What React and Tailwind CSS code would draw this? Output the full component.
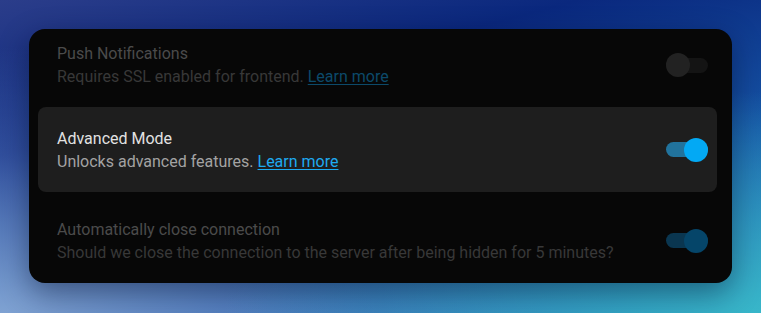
import { useState } from "react";

function Toggle({ on, dim }) {
  const track = on
    ? dim
      ? "bg-[#0a3650]"
      : "bg-[#21739d]"
    : "bg-[#141414]";
  const knob = on ? (dim ? "bg-[#054569]" : "bg-[#03a9f4]") : "bg-[#222222]";
  return (
    <div className="relative w-[42px] h-[24px] flex items-center shrink-0">
      <div className={`w-full h-[15px] rounded-full ${track}`}></div>
      <div
        className={`absolute top-0 w-[24px] h-[24px] rounded-full ${knob} ${
          on ? "left-[18px]" : "left-0"
        }`}
      ></div>
    </div>
  );
}

export default function App() {
  const [rows] = useState([
    {
      title: "Push Notifications",
      text: "Requires SSL enabled for frontend.",
      link: true,
      on: false,
      dim: true,
      height: "h-[72px]",
    },
    {
      title: "Advanced Mode",
      text: "Unlocks advanced features.",
      link: true,
      on: true,
      dim: false,
      active: true,
      height: "h-[85px]",
    },
    {
      title: "Automatically close connection",
      text: "Should we close the connection to the server after being hidden for 5 minutes?",
      link: false,
      on: true,
      dim: true,
      height: "h-[85px]",
    },
  ]);

  return (
    <div
      className="w-[761px] h-[313px] overflow-hidden pt-[29px] pl-[29px] bg-[radial-gradient(ellipse_at_100%_100%,#38b6c9_0%,transparent_50%),radial-gradient(ellipse_at_0%_100%,#7fa2d2_0%,rgba(90,120,190,0.5)_35%,transparent_60%),linear-gradient(165deg,#2b3d8a_0%,#0a287e_30%,#1656a8_65%,#2a80c0_100%)]"
      style={{ fontFamily: "Roboto, 'Noto Sans', sans-serif" }}
    >
      <div className="w-[703px] h-[254px] rounded-2xl bg-[#070707] overflow-hidden pl-[9px] pr-[15px] flex flex-col gap-[6px] shadow-[0_10px_30px_rgba(0,10,40,0.45)]">
        {rows.map((row, i) => (
          <div
            key={i}
            className={`${row.height} shrink-0 flex items-center justify-between pl-[19px] pr-[9px] rounded-lg ${
              row.active ? "bg-[#1e1e1e]" : ""
            }`}
          >
            <div className="flex flex-col text-[16px] leading-[23px]">
              <span className={row.dim ? "text-[#4b4b4b]" : "text-[#e2e2e2]"}>
                {row.title}
              </span>
              <span className={row.dim ? "text-[#383838]" : "text-[#a3a3a3]"}>
                {row.text}
                {row.link && (
                  <>
                    {" "}
                    <a
                      href="#"
                      className={`underline underline-offset-2 ${
                        row.dim ? "text-[#0c4a6a]" : "text-[#1eaaf0]"
                      }`}
                    >
                      Learn more
                    </a>
                  </>
                )}
              </span>
            </div>
            <Toggle on={row.on} dim={row.dim} />
          </div>
        ))}
      </div>
    </div>
  );
}
